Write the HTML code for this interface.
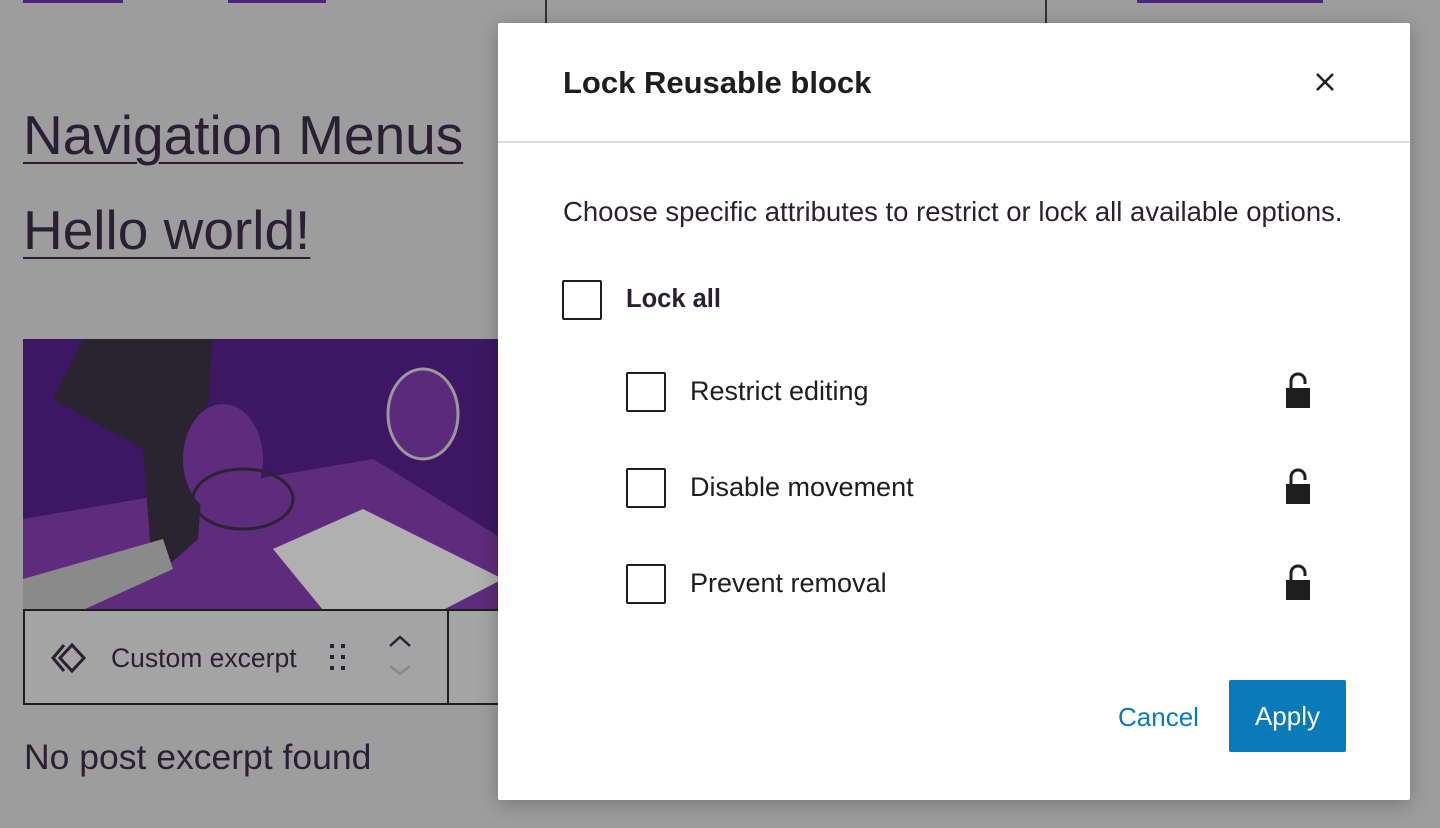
<!DOCTYPE html>
<html><head><meta charset="utf-8"><style>
*{margin:0;padding:0;box-sizing:border-box}
body{width:1440px;height:828px;overflow:hidden;background:#9d9d9d;font-family:"Liberation Sans",sans-serif;position:relative;color:#2a1f33}
.a{position:absolute}
.link{font-size:55px;text-decoration:underline;text-decoration-thickness:2px;text-underline-offset:8px;color:#2a1f33}
.modal{left:498px;top:23px;width:912px;height:777px;background:#fff;border-radius:2px;box-shadow:0 4px 20px rgba(0,0,0,.25)}
.cb{position:absolute;width:40px;height:40px;border:2px solid #1e1e1e;border-radius:2px;background:#fff}
.lbl{position:absolute;font-size:27px;color:#1e1e1e}
</style></head><body>
<div class="a" style="left:23px;top:0;width:100px;height:3px;background:#4b2580"></div>
<div class="a" style="left:228px;top:0;width:98px;height:3px;background:#4b2580"></div>
<div class="a" style="left:1137px;top:0;width:186px;height:3px;background:#4b2580"></div>
<div class="a" style="left:545px;top:0;width:502px;height:23px;border-left:2px solid #333;border-right:2px solid #333"></div>
<div class="a link" style="left:23px;top:103px">Navigation Menus</div>
<div class="a link" style="left:23px;top:198px">Hello world!</div>
<div class="a" style="left:23px;top:339px;width:480px;height:271px;background:#3d1763;overflow:hidden">
<svg width="480" height="271">
<rect x="0" y="0" width="480" height="271" fill="#3d1763"/>
<path d="M0 180 L0 271 L480 271 L480 200 L350 120 Z" fill="#5f2b7c"/>
<path d="M60 0 L190 0 L175 200 L130 240 L120 110 L30 60 Z" fill="#2a2430"/>
<path d="M250 210 L340 170 L480 240 L420 271 L300 271 Z" fill="#b0b0b0"/>
<ellipse cx="200" cy="120" rx="40" ry="55" fill="#5f2b7c"/>
<ellipse cx="400" cy="75" rx="35" ry="45" fill="#5a2a7c" stroke="#999" stroke-width="3"/>
<path d="M0 240 L140 200 L150 230 L60 271 L0 271Z" fill="#8a8a8a"/>
<ellipse cx="220" cy="160" rx="50" ry="30" fill="none" stroke="#2a2430" stroke-width="3"/>
</svg></div>
<div class="a" style="left:23px;top:609px;width:480px;height:96px;border:2px solid #1e1e1e;background:#a4a4a4"></div>
<div class="a" style="left:447px;top:609px;width:2px;height:96px;background:#1e1e1e"></div>
<svg class="a" style="left:50px;top:640px" width="42" height="36" viewBox="0 0 42 36"><path d="M14 5 L3 18 L14 31 M22 5 L10 18 L22 31 L34 18 Z" fill="none" stroke="#2a1f33" stroke-width="3"/></svg>
<div class="a" style="left:111px;top:643px;font-size:26.5px">Custom excerpt</div>
<svg class="a" style="left:328px;top:641px" width="22" height="34"><g fill="#2a1f33"><rect x="2" y="3" width="4" height="4"/><rect x="13" y="3" width="4" height="4"/><rect x="2" y="14" width="4" height="4"/><rect x="13" y="14" width="4" height="4"/><rect x="2" y="25" width="4" height="4"/><rect x="13" y="25" width="4" height="4"/></g></svg>
<svg class="a" style="left:386px;top:632px" width="30" height="50"><path d="M4 14 L14 5 L24 14" fill="none" stroke="#2a1f33" stroke-width="2.5"/><path d="M4 34 L14 42 L24 34" fill="none" stroke="#888" stroke-width="2.5"/></svg>
<div class="a" style="left:24px;top:737px;font-size:35.5px">No post excerpt found</div>

<div class="a modal">
<div class="a" style="left:65px;top:42px;font-size:31px;font-weight:bold;color:#1e1e1e">Lock Reusable block</div>
<svg class="a" style="left:815px;top:47px" width="24" height="24"><path d="M4 4 L20 20 M20 4 L4 20" stroke="#1e1e1e" stroke-width="2.5"/></svg>
<div class="a" style="left:0;top:118px;width:912px;height:2px;background:#ddd"></div>
<div class="a" style="left:65px;top:173px;font-size:27.5px;color:#2a1f33">Choose specific attributes to restrict or lock all available options.</div>
<div class="cb" style="left:64px;top:257px"></div>
<div class="lbl" style="left:128px;top:262px;font-weight:bold;color:#2a1f33;font-size:25.5px">Lock all</div>
<div class="cb" style="left:128px;top:349px"></div>
<div class="lbl" style="left:192px;top:353px">Restrict editing</div>
<div class="cb" style="left:128px;top:445px"></div>
<div class="lbl" style="left:192px;top:449px">Disable movement</div>
<div class="cb" style="left:128px;top:541px"></div>
<div class="lbl" style="left:192px;top:545px">Prevent removal</div>
<svg class="a" style="left:786px;top:349px" width="28" height="40"><path d="M7 16 V9 A7 7 0 0 1 21 9 V12" fill="none" stroke="#1e1e1e" stroke-width="3"/><rect x="2" y="16" width="24" height="20" fill="#1e1e1e"/></svg>
<svg class="a" style="left:786px;top:445px" width="28" height="40"><path d="M7 16 V9 A7 7 0 0 1 21 9 V12" fill="none" stroke="#1e1e1e" stroke-width="3"/><rect x="2" y="16" width="24" height="20" fill="#1e1e1e"/></svg>
<svg class="a" style="left:786px;top:541px" width="28" height="40"><path d="M7 16 V9 A7 7 0 0 1 21 9 V12" fill="none" stroke="#1e1e1e" stroke-width="3"/><rect x="2" y="16" width="24" height="20" fill="#1e1e1e"/></svg>
<div class="a" style="left:620px;top:679px;font-size:26px;color:#0a7bb8">Cancel</div>
<div class="a" style="left:731px;top:657px;width:117px;height:72px;background:#0a7bb8;border-radius:2px;color:#fff;font-size:26px;line-height:72px;text-align:center">Apply</div>
</div>
</body></html>
